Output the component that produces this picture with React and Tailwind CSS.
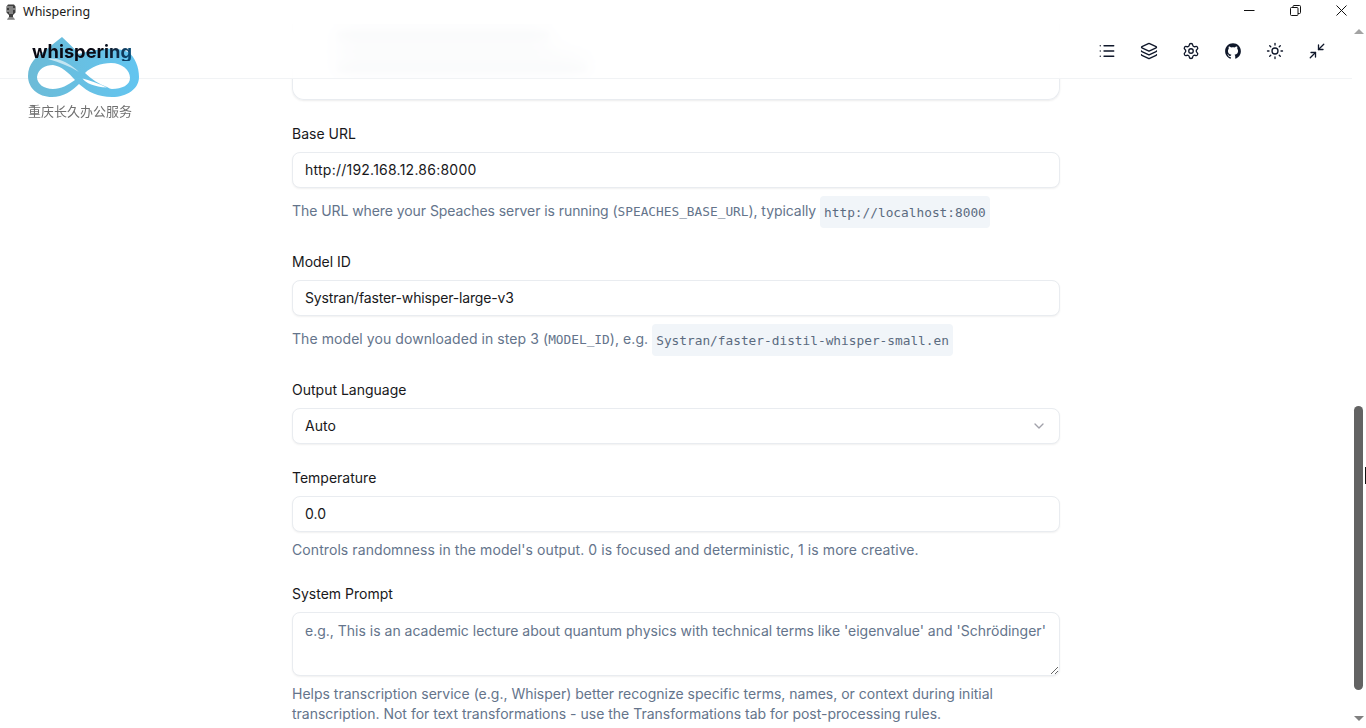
import React from 'react';
import { ChevronDown, Layers, List, Minimize2, Settings, Sun } from 'lucide-react';
import { AiOutlineGithub } from 'react-icons/ai';

const Logo = () => (
  <div className="absolute left-[28px] top-[37px] z-20 w-[112px]">
    <svg viewBox="0 0 111 61" className="block h-[61px] w-[111px]">
      <defs>
        <linearGradient id="logoFill" x1="0" x2="1" y1="0" y2="0">
          <stop offset="0" stopColor="#6cbbd7" />
          <stop offset="1" stopColor="#63c5f0" />
        </linearGradient>
      </defs>
      <path
        fill="url(#logoFill)"
        fillRule="evenodd"
        d="M34 0 C40 6 46 11 51 17 C66 12 88 9 100 15 C107 20 111 30 111 40 C111 52 99 60 84 60 C70 60 60 55 51 47 C44 54 35 60 24 60 C10 60 0 51 0 39 C0 27 8 19 17 14 C22 9 28 5 34 0 Z M9 40 C10 32 17 28 25 28 C33 29 41 36 47 43 C40 48 33 52 25 52 C16 52 9 47 9 40 Z M57 36 C63 30 73 26 83 26 C94 26 102 33 102 41 C102 48 94 52 84 52 C82 52 80 50.500 79 50 C71 47 63 42 57 36 Z M79 50.500 C70 46.500 61 43 54.500 41.500 C58 46 66 50 79 50.500 Z"
      />
      <path fill="#ffffff" fillOpacity="0.6" d="M20 22 C30 20 41 26 51 35 C41 29 31 25 20 22 Z" />
    </svg>
    <div className="absolute left-[4px] top-[4px] bg-gradient-to-r from-[#0a0a14] from-70% to-[#07507c] bg-clip-text text-[18.3px] font-bold leading-[20px] text-transparent">
      whispering
    </div>
    <div className="mt-[6px] w-fit text-[13px] leading-[15px] text-[#707070]">重庆长久办公服务</div>
  </div>
);

const TitleBar = () => (
  <div className="flex h-[24px] items-start justify-between bg-white">
    <div className="flex h-[24px] items-center">
      <svg viewBox="0 0 12 16" className="ml-[5px] mr-[6px] h-[16px] w-[12px]">
        <path d="M3 0.500h6l1.500 2v6L8 11v2l2 2.500H2L4 13v-2L1.500 8.500v-6z" fill="#3f3f3f" />
        <path d="M2 3h6M4 5h6M2 7h6M4 9h4M3 14h6" stroke="#d8d8d8" strokeWidth="0.9" />
      </svg>
      <span className="font-['Noto_Sans',sans-serif] text-[12.5px] text-[#1a1a1a]">Whispering</span>
    </div>
    <div className="flex items-center pr-[2px]">
      <button className="flex h-[20px] w-[46px] items-center justify-center">
        <svg width="11" height="11" viewBox="0 0 11 11"><path d="M0 5.500h10.500" stroke="#111" /></svg>
      </button>
      <button className="flex h-[20px] w-[46px] items-center justify-center">
        <svg width="11" height="11" viewBox="0 0 11 11" fill="none" stroke="#111"><rect x="0.500" y="2.500" width="7.500" height="8" rx="1" /><path d="M3 2.500V1.500a1 1 0 0 1 1-1h5.500a1 1 0 0 1 1 1v6a1 1 0 0 1-1 1H8" /></svg>
      </button>
      <button className="flex h-[20px] w-[46px] items-center justify-center">
        <svg width="11" height="11" viewBox="0 0 11 11"><path d="M0.500 0.500l10 10M10.500 0.500l-10 10" stroke="#111" /></svg>
      </button>
    </div>
  </div>
);

const Header = () => {
  const icons = [List, Layers, Settings, AiOutlineGithub, Sun, Minimize2];
  return (
    <div className="absolute left-0 right-[14px] top-0 z-10 flex h-[55px] items-center justify-end border-b border-[#f1f3f5] bg-white/85 pr-[14px] backdrop-blur-md">
      {icons.map((Icon, i) => (
        <button key={i} className="flex h-[36px] w-[42px] items-center justify-center text-[#0f172a]">
          <Icon size={18} strokeWidth={1.75} />
        </button>
      ))}
    </div>
  );
};

const Code = ({ children }) => (
  <code className="rounded-[4px] bg-[#f1f5f9] px-[4px] py-[8.5px] font-['DejaVu_Sans_Mono',monospace] text-[12.8px] tracking-normal text-[#5b6b80]">
    {children}
  </code>
);

const Var = ({ children }) => (
  <span className="font-['DejaVu_Sans_Mono',monospace] text-[12.8px] tracking-normal">{children}</span>
);

const Field = ({ label, children }) => (
  <div className="mt-[24px]">
    <div className="mb-[8px] text-[14px] leading-[20px] text-[#18181b]">{label}</div>
    {children}
  </div>
);

const boxCls = 'w-full rounded-[8px] border border-[#e9ecf0] bg-white text-[14px] text-[#18181b] shadow-[0_1px_2px_rgba(0,0,0,0.06)]';

export default function App() {
  return (
    <div className="relative flex h-[728px] w-[1366px] flex-col overflow-hidden bg-white font-['Inter','Noto_Sans_CJK_SC',sans-serif]">
      <TitleBar />
      <div className="relative flex min-h-0 flex-1">
        <Header />
        <div className="min-w-0 flex-1 overflow-hidden">
          <div className="mx-auto w-[768px]">
            <div className="h-[76px] rounded-b-[12px] border border-t-0 border-[#e9ecf0] pt-[8px] shadow-[0_1px_2px_rgba(0,0,0,0.08)]">
              <div className="ml-[44px] h-[12px] w-[212px] bg-[#64748b]/40 blur-[2px]" />
              <div className="ml-[44px] mt-[15px] h-[12px] w-[250px] bg-[#64748b]/40 blur-[2px]" />
            </div>
            <Field label="Base URL">
              <div className={`${boxCls} flex h-[36px] items-center px-[12px] pb-[2px] tracking-[0.24px]`}>http://192.168.12.86:8000</div>
              <p className="mt-[8px] h-[32px] text-[14px] leading-[30px] tracking-[-0.07px] text-[#64748b]">
                The URL where your Speaches server is running (<Var>SPEACHES_BASE_URL</Var>), typically <Code>http://localhost:8000</Code>
              </p>
            </Field>
            <Field label="Model ID">
              <div className={`${boxCls} flex h-[36px] items-center px-[12px] pb-[2px] tracking-[-0.16px]`}>Systran/faster-whisper-large-v3</div>
              <p className="mt-[8px] h-[32px] text-[14px] leading-[30px] tracking-[0.07px] text-[#64748b]">
                The model you downloaded in step 3 (<Var>MODEL_ID</Var>), e.g. <Code>Systran/faster-distil-whisper-small.en</Code>
              </p>
            </Field>
            <Field label="Output Language">
              <div className={`${boxCls} flex h-[36px] items-center justify-between px-[12px]`}>
                <span className="pb-[2px]">Auto</span>
                <ChevronDown size={16} className="text-[#a1a1aa]" />
              </div>
            </Field>
            <Field label="Temperature">
              <div className={`${boxCls} flex h-[36px] items-center px-[12px] pb-[2px]`}>0.0</div>
              <p className="mt-[8px] text-[14px] leading-[20px] tracking-[0.08px] text-[#64748b]">
                Controls randomness in the model's output. 0 is focused and deterministic, 1 is more creative.
              </p>
            </Field>
            <Field label="System Prompt">
              <textarea
                readOnly
                className={`${boxCls} block h-[64px] px-[12px] py-[8px] leading-[20px] outline-none placeholder:text-[#64748b]`}
                placeholder="e.g., This is an academic lecture about quantum physics with technical terms like 'eigenvalue' and 'Schrödinger'"
              />
              <p className="mt-[8px] text-[14px] leading-[20px] text-[#64748b]">
                Helps transcription service (e.g., Whisper) better recognize specific terms, names, or context during initial transcription. Not for text transformations - use the Transformations tab for post-processing rules.
              </p>
            </Field>
          </div>
        </div>
        <div className="flex w-[14px] shrink-0 flex-col items-center bg-white pl-[2px] pr-[3px]">
          <div className="mt-[5px] h-0 w-0 border-x-[5px] border-b-[5px] border-x-transparent border-b-[#a3a3a3]" />
          <div className="mt-[372px] h-[284px] w-[9px] rounded-full bg-[#636363]" />
          <div className="mt-[26px] h-0 w-0 border-x-[5px] border-t-[5px] border-x-transparent border-t-[#808080]" />
        </div>
      </div>
      <Logo />
      <div className="absolute left-[1365px] top-[467px] h-[17px] w-[1px] bg-[#111]" />
    </div>
  );
}
